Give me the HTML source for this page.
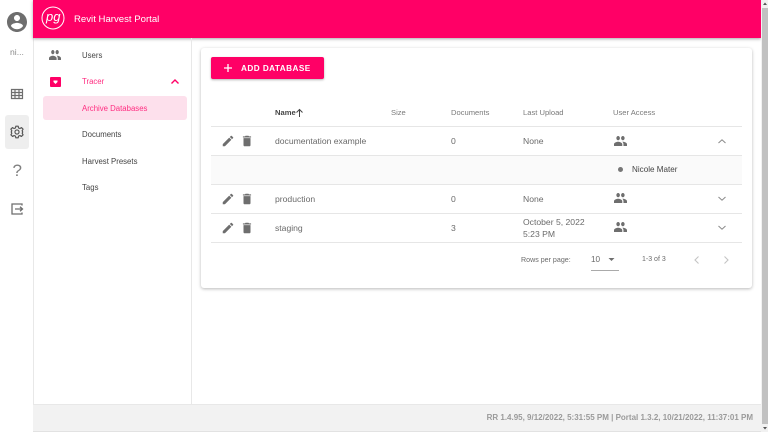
<!DOCTYPE html>
<html><head><meta charset="utf-8"><style>
html,body{margin:0;padding:0;width:768px;height:432px;overflow:hidden;background:#fff;font-family:"Liberation Sans",sans-serif}
div,svg,span{position:absolute}
.t{white-space:nowrap;line-height:12px}
.i{fill:#6e6e6e}
.l{left:211px;width:531px;height:1px;background:#e6e6e6}
.h{font-size:7.6px;color:#7a7a7a;top:107px}
.c{font-size:8.6px;color:#6a6a6a}
.n{font-size:7.8px;color:#444;left:82px}
</style></head><body>
<!-- rail -->
<div style="left:33px;top:0;width:1px;height:432px;background:#e8e8e8"></div>
<svg style="left:5px;top:10px" width="24" height="24" viewBox="0 0 24 24"><path class="i" d="M12 2C6.48 2 2 6.48 2 12s4.48 10 10 10 10-4.48 10-10S17.52 2 12 2zm0 3c1.66 0 3 1.34 3 3s-1.34 3-3 3-3-1.34-3-3 1.34-3 3-3zm0 14.2c-2.5 0-4.71-1.28-6-3.22.03-1.99 4-3.08 6-3.08 1.99 0 5.97 1.09 6 3.08-1.29 1.94-3.5 3.22-6 3.22z"/></svg>
<div class="t" style="left:10px;top:46px;font-size:8.6px;color:#8a8a8a">ni...</div>
<svg style="left:10px;top:87px" width="14" height="14" viewBox="0 0 14 14"><path fill="none" stroke="#6e6e6e" stroke-width="1.2" d="M1.5 2.500h11v9h-11zM1.500 5.500h11M1.500 8.500h11M5 2.500v9M9 2.500v9"/></svg>
<div style="left:5px;top:115px;width:24px;height:34px;background:#eeeeee;border-radius:3px"></div>
<svg style="left:10px;top:125px" width="14" height="14" viewBox="0 0 24 24"><path fill="none" stroke="#555" stroke-width="2" stroke-linejoin="round" d="M10 2h4l.6 3 2.4 1 2.6-1.6 2.8 2.8L20.800 9.800l1 2.200-.9 2.200 1.500 2.600-2.800 2.800-2.600-1.500-2.400 1-.6 2.900h-4l-.6-2.900-2.400-1-2.600 1.500-2.800-2.800 1.500-2.600-1-2.200 1-2.200-1.600-2.600 2.800-2.800L7 6l2.400-1z"/><circle cx="12" cy="12" r="3.500" fill="none" stroke="#555" stroke-width="2"/></svg>
<div class="t" style="left:12.500px;top:163px;font-size:17px;line-height:15px;color:#808080">?</div>
<svg style="left:10px;top:202px" width="14" height="14" viewBox="0 0 14 14"><path fill="none" stroke="#6e6e6e" stroke-width="1.300" d="M12 3.500V2H2v10h10v-1.500M5 7h7.500M10 4.800 12.500 7 10 9.200"/></svg>
<!-- header -->
<div style="left:33px;top:0;width:728px;height:38px;background:#ff0066;box-shadow:0 1px 3px rgba(0,0,0,.35)"></div>
<svg style="left:41px;top:6px" width="24" height="24" viewBox="0 0 24 24"><circle cx="12" cy="12" r="11" fill="none" stroke="#fff" stroke-width="1"/></svg>
<div class="t" style="left:46px;top:11px;font-size:13px;color:#fff;font-style:italic">pg</div>
<div class="t" style="left:74px;top:13.500px;font-size:9.600px;color:#fff">Revit Harvest Portal</div>
<!-- sidebar -->
<div style="left:191px;top:38px;width:1px;height:366px;background:#e8e8e8"></div>
<svg style="left:49px;top:50px" width="12" height="10" viewBox="1 5 22 14" preserveAspectRatio="none"><path class="i" d="M16 11c1.660 0 2.990-1.340 2.990-3S17.660 5 16 5s-3 1.340-3 3 1.340 3 3 3zm-8 0c1.660 0 2.990-1.340 2.990-3S9.660 5 8 5 5 6.340 5 8s1.340 3 3 3zm0 2c-2.330 0-7 1.170-7 3.500V19h14v-2.500C15 14.170 10.330 13 8 13zm8 0c-.29 0-.62.02-.97.05C16.190 13.890 17 15.020 17 16.500V19h6v-2.500c0-2.330-4.670-3.500-7-3.500z"/></svg>
<div class="t n" style="top:50px">Users</div>
<div style="left:50px;top:77px;width:11px;height:10px;background:#ff0066;border-radius:1px"></div>
<svg style="left:50px;top:77px" width="11" height="10" viewBox="0 0 11 10"><path fill="#fff" d="M3.500 3.500h4v1.500L5.500 7 3.500 5z"/></svg>
<div class="t n" style="top:76px;color:#ff2d80">Tracer</div>
<svg style="left:170px;top:77px" width="10" height="9" viewBox="0 0 10 9"><path fill="none" stroke="#ff0066" stroke-width="1.400" d="M1.500 6.500 5 3l3.500 3.500"/></svg>
<div style="left:43px;top:96px;width:144px;height:24px;background:#fde0ec;border-radius:3px"></div>
<div class="t n" style="top:103px;color:#ff2d80">Archive Databases</div>
<div class="t n" style="top:129px">Documents</div>
<div class="t n" style="top:156px">Harvest Presets</div>
<div class="t n" style="top:182px">Tags</div>
<!-- card -->
<div style="left:201px;top:48px;width:551px;height:240px;background:#fff;border-radius:3px;box-shadow:0 1px 3px rgba(0,0,0,.28)"></div>
<div style="left:211px;top:57px;width:113px;height:22px;background:#ff0066;border-radius:2px;box-shadow:0 1px 2px rgba(0,0,0,.3)"></div>
<svg style="left:222px;top:62px" width="12" height="12" viewBox="0 0 12 12"><path stroke="#fff" stroke-width="1.300" d="M6 2v8M2 6h8"/></svg>
<div class="t" style="left:241px;top:63px;font-size:8.200px;font-weight:bold;letter-spacing:.45px;color:#fff">ADD DATABASE</div>
<!-- table header -->
<div class="t h" style="left:275px;color:#444;font-weight:bold">Name</div>
<svg style="left:295px;top:108px" width="9" height="10" viewBox="0 0 9 10"><path fill="none" stroke="#444" stroke-width="1" d="M4.500 9V1.500M1.500 4.500l3-3 3 3"/></svg>
<div class="t h" style="left:391px">Size</div>
<div class="t h" style="left:451px">Documents</div>
<div class="t h" style="left:523px">Last Upload</div>
<div class="t h" style="left:613px">User Access</div>
<div class="l" style="top:126px"></div>
<div style="left:211px;top:156px;width:531px;height:28px;background:#fafafa"></div>
<div class="l" style="top:155px"></div>
<div class="l" style="top:184px"></div>
<div class="l" style="top:213px"></div>
<div class="l" style="top:242px"></div>
<!-- row 1 -->
<svg style="left:221px;top:134px" width="14" height="14" viewBox="0 0 24 24"><path class="i" d="M3 17.250V21h3.750L17.810 9.940l-3.750-3.750L3 17.250zM20.710 7.040a1 1 0 0 0 0-1.410l-2.340-2.340a1 1 0 0 0-1.410 0l-1.830 1.830 3.750 3.750 1.830-1.830z"/></svg>
<svg style="left:240px;top:134px" width="14" height="14" viewBox="0 0 24 24"><path class="i" d="M6 19c0 1.100.9 2 2 2h8c1.100 0 2-.9 2-2V7H6v12zM19 4h-3.500l-1-1h-5l-1 1H5v2h14V4z"/></svg>
<div class="t c" style="left:275px;top:135px">documentation example</div>
<div class="t c" style="left:451px;top:135px">0</div>
<div class="t c" style="left:523px;top:135px">None</div>
<svg style="left:614px;top:136px" width="13" height="10" viewBox="1 5 22 14" preserveAspectRatio="none"><path class="i" d="M16 11c1.660 0 2.990-1.340 2.990-3S17.660 5 16 5s-3 1.340-3 3 1.340 3 3 3zm-8 0c1.660 0 2.990-1.340 2.990-3S9.660 5 8 5 5 6.340 5 8s1.340 3 3 3zm0 2c-2.330 0-7 1.170-7 3.500V19h14v-2.500C15 14.170 10.330 13 8 13zm8 0c-.29 0-.62.02-.97.05C16.190 13.890 17 15.020 17 16.500V19h6v-2.500c0-2.330-4.670-3.500-7-3.500z"/></svg>
<svg style="left:717px;top:137px" width="10" height="9" viewBox="0 0 10 9"><path fill="none" stroke="#888" stroke-width="1" d="M1.500 6 5 2.800 8.500 6"/></svg>
<!-- expanded -->
<div style="left:618px;top:167px;width:5px;height:5px;border-radius:50%;background:#777"></div>
<div class="t" style="left:632px;top:164px;font-size:8.100px;color:#444">Nicole Mater</div>
<!-- row 2 -->
<svg style="left:221px;top:192px" width="14" height="14" viewBox="0 0 24 24"><path class="i" d="M3 17.250V21h3.750L17.810 9.940l-3.750-3.750L3 17.250zM20.710 7.040a1 1 0 0 0 0-1.410l-2.340-2.340a1 1 0 0 0-1.410 0l-1.830 1.830 3.750 3.750 1.830-1.830z"/></svg>
<svg style="left:240px;top:192px" width="14" height="14" viewBox="0 0 24 24"><path class="i" d="M6 19c0 1.100.9 2 2 2h8c1.100 0 2-.9 2-2V7H6v12zM19 4h-3.500l-1-1h-5l-1 1H5v2h14V4z"/></svg>
<div class="t c" style="left:275px;top:193px">production</div>
<div class="t c" style="left:451px;top:193px">0</div>
<div class="t c" style="left:523px;top:193px">None</div>
<svg style="left:614px;top:193px" width="13" height="10" viewBox="1 5 22 14" preserveAspectRatio="none"><path class="i" d="M16 11c1.660 0 2.990-1.340 2.990-3S17.660 5 16 5s-3 1.340-3 3 1.340 3 3 3zm-8 0c1.660 0 2.990-1.340 2.990-3S9.660 5 8 5 5 6.340 5 8s1.340 3 3 3zm0 2c-2.330 0-7 1.170-7 3.500V19h14v-2.500C15 14.170 10.330 13 8 13zm8 0c-.29 0-.62.02-.97.05C16.190 13.890 17 15.020 17 16.500V19h6v-2.500c0-2.330-4.670-3.500-7-3.500z"/></svg>
<svg style="left:717px;top:194px" width="10" height="9" viewBox="0 0 10 9"><path fill="none" stroke="#888" stroke-width="1" d="M1.500 3 5 6.200 8.500 3"/></svg>
<!-- row 3 -->
<svg style="left:221px;top:221px" width="14" height="14" viewBox="0 0 24 24"><path class="i" d="M3 17.250V21h3.750L17.810 9.940l-3.750-3.750L3 17.250zM20.710 7.040a1 1 0 0 0 0-1.410l-2.340-2.340a1 1 0 0 0-1.410 0l-1.830 1.830 3.750 3.750 1.830-1.830z"/></svg>
<svg style="left:240px;top:221px" width="14" height="14" viewBox="0 0 24 24"><path class="i" d="M6 19c0 1.100.9 2 2 2h8c1.100 0 2-.9 2-2V7H6v12zM19 4h-3.500l-1-1h-5l-1 1H5v2h14V4z"/></svg>
<div class="t c" style="left:275px;top:222px">staging</div>
<div class="t c" style="left:451px;top:222px">3</div>
<div class="t c" style="left:523px;top:216px">October 5, 2022</div>
<div class="t c" style="left:523px;top:228px">5:23 PM</div>
<svg style="left:614px;top:222px" width="13" height="10" viewBox="1 5 22 14" preserveAspectRatio="none"><path class="i" d="M16 11c1.660 0 2.990-1.340 2.990-3S17.660 5 16 5s-3 1.340-3 3 1.340 3 3 3zm-8 0c1.660 0 2.990-1.340 2.990-3S9.660 5 8 5 5 6.340 5 8s1.340 3 3 3zm0 2c-2.330 0-7 1.170-7 3.500V19h14v-2.500C15 14.170 10.330 13 8 13zm8 0c-.29 0-.62.02-.97.05C16.190 13.890 17 15.020 17 16.500V19h6v-2.500c0-2.330-4.670-3.500-7-3.500z"/></svg>
<svg style="left:717px;top:223px" width="10" height="9" viewBox="0 0 10 9"><path fill="none" stroke="#888" stroke-width="1" d="M1.500 3 5 6.200 8.500 3"/></svg>
<!-- pagination -->
<div class="t" style="left:521px;top:254px;font-size:7.100px;color:#6a6a6a">Rows per page:</div>
<div class="t" style="left:591px;top:254px;font-size:8.200px;color:#6a6a6a">10</div>
<svg style="left:607px;top:257px" width="9" height="6" viewBox="0 0 9 6"><path fill="#6e6e6e" d="M1.500 1h6L4.500 4z"/></svg>
<div style="left:591px;top:270px;width:28px;height:1px;background:#aaa"></div>
<div class="t" style="left:642px;top:254px;font-size:7px;color:#6a6a6a">1-3 of 3</div>
<svg style="left:692px;top:255px" width="9" height="10" viewBox="0 0 9 10"><path fill="none" stroke="#c4c4c4" stroke-width="1.100" d="M6.500 1.500 3 5l3.500 3.500"/></svg>
<svg style="left:722px;top:255px" width="9" height="10" viewBox="0 0 9 10"><path fill="none" stroke="#c4c4c4" stroke-width="1.100" d="M2.500 1.500 6 5 2.500 8.500"/></svg>
<!-- footer -->
<div style="left:33px;top:404px;width:728px;height:27px;background:#f2f2f2;border-top:1px solid #e8e8e8;box-sizing:border-box"></div>
<div style="left:33px;top:431px;width:728px;height:1px;background:#e2e2e2"></div>
<div class="t" style="left:300px;width:453px;top:412px;text-align:right;font-size:8px;font-weight:bold;color:#9a9a9a">RR 1.4.95, 9/12/2022, 5:31:55 PM | Portal 1.3.2, 10/21/2022, 11:37:01 PM</div>
<!-- scrollbar -->
<div style="left:761px;top:0;width:7px;height:432px;background:#f1f1f1"></div>
<div style="left:762px;top:8px;width:6px;height:416px;background:#c1c1c1"></div>
<svg style="left:762px;top:1px" width="6" height="6" viewBox="0 0 6 6"><path fill="#555" d="M3 1.500 5 4H1z"/></svg>
<svg style="left:762px;top:425px" width="6" height="6" viewBox="0 0 6 6"><path fill="#555" d="M3 4.500 1 2h4z"/></svg>
</body></html>
